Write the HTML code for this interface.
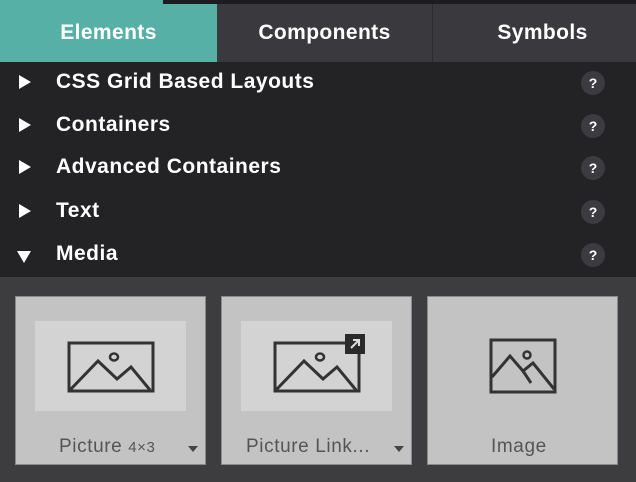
<!DOCTYPE html>
<html><head><style>
*{margin:0;padding:0;box-sizing:border-box}
body{width:636px;height:482px;background:#3d3d40;font-family:"Liberation Sans",sans-serif;position:relative;overflow:hidden}
.top{position:absolute;left:0;top:0;width:636px;height:4px;background:#1d1c20}
.top i{position:absolute;left:0;top:0;width:163px;height:4px;background:#56b0a5}
.tab{position:absolute;top:4px;height:58px;line-height:58px;text-align:center;color:#fff;font-weight:bold;font-size:21px;letter-spacing:0.4px;background:#3a393e}
.list{position:absolute;left:0;top:62px;width:636px;height:215px;background:#232225}
.row{position:absolute;left:0;width:636px;height:43px;color:#fff;font-weight:bold;font-size:21px;letter-spacing:0.5px}
.row span{position:absolute;left:56px;top:8px}
.tri{position:absolute;left:19px;top:13px;width:0;height:0;border-top:7px solid transparent;border-bottom:7px solid transparent;border-left:12px solid #fff}
.down{left:17px;top:17px;border-left:7px solid transparent;border-right:7px solid transparent;border-top:12px solid #fff;border-bottom:0}
.q{position:absolute;left:581px;top:9px;width:24px;height:24px;border-radius:50%;background:#3c3b40;color:#fff;font-size:14px;text-align:center;line-height:24px;letter-spacing:0}
.card{position:absolute;top:296px;width:191px;height:169px;background:#c3c3c3;border:1px solid #8a8a8a}
.inner{position:absolute;left:19px;top:24px;width:151px;height:90px;background:#d3d3d3}
.lab{position:absolute;top:139px;font-size:19px;color:#555;letter-spacing:0.6px}
.dd{position:absolute;left:172px;top:149px;border-left:5px solid transparent;border-right:5px solid transparent;border-top:6px solid #444}
</style></head><body>
<div class="top"><i></i></div>
<div class="tab" style="left:0;width:217px;background:#56b0a5">Elements</div>
<div class="tab" style="left:217px;width:216px;border-right:1px solid #2c2b30">Components</div>
<div class="tab" style="left:433px;width:203px;padding-left:16px">Symbols</div>
<div class="list">
<div class="row" style="top:0"><div class="tri"></div><span>CSS Grid Based Layouts</span><div class="q">?</div></div>
<div class="row" style="top:43px"><div class="tri"></div><span>Containers</span><div class="q">?</div></div>
<div class="row" style="top:85px"><div class="tri"></div><span>Advanced Containers</span><div class="q">?</div></div>
<div class="row" style="top:129px"><div class="tri"></div><span>Text</span><div class="q">?</div></div>
<div class="row" style="top:172px"><div class="tri down"></div><span>Media</span><div class="q">?</div></div>
</div>
<div class="card" style="left:15px">
<div class="inner"><svg width="151" height="90" viewBox="0 0 151 90"><g fill="none" stroke="#333" stroke-width="3"><rect x="34" y="22" width="84" height="48"/><path d="M35 69 L63 40 L82 58 L96 46 L115 69"/><ellipse cx="79" cy="36" rx="4" ry="3.5" stroke-width="2.5"/></g></svg></div>
<div class="lab" style="left:43px">Picture <span style="font-size:15px">4×3</span></div><div class="dd"></div></div>
<div class="card" style="left:221px">
<div class="inner"><svg width="151" height="90" viewBox="0 0 151 90"><g fill="none" stroke="#333" stroke-width="3"><path d="M118 33 V70 H34 V22 H106"/><path d="M35 69 L63 40 L82 58 L96 46 L115 69"/><ellipse cx="79" cy="36" rx="4" ry="3.5" stroke-width="2.5"/></g><rect x="104" y="13" width="20" height="20" fill="#2a2a2a"/><path d="M110 27 L118 19 M112 19 H118 V25" stroke="#ddd" stroke-width="2" fill="none"/></svg></div>
<div class="lab" style="left:24px">Picture Link...</div><div class="dd"></div></div>
<div class="card" style="left:427px">
<svg style="position:absolute;left:60px;top:40px" width="70" height="60" viewBox="0 0 70 60"><g fill="none" stroke="#333" stroke-width="3"><rect x="3" y="3" width="64" height="52"/><path d="M4 40 L22 19 L35 34 L45 26 L66 52"/><path d="M35 34 L43 46" /><circle cx="39" cy="18" r="3.5" stroke-width="2.5"/></g></svg>
<div class="lab" style="left:63px">Image</div></div>
</body></html>
